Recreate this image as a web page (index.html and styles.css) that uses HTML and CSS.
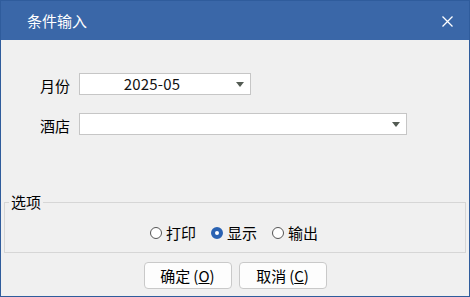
FILE: index.html
```html
<!DOCTYPE html>
<html lang="zh-CN">
<head>
<meta charset="utf-8">
<title>条件输入</title>
<link rel="stylesheet" href="styles.css">
</head>
<body>
<div class="window">
  <div class="titlebar">
    <span class="title">条件输入</span>
    <svg class="close" width="11" height="11" viewBox="0 0 11 11"><path d="M0.5 0.5 L10.5 10.5 M10.5 0.5 L0.5 10.5" stroke="#fff" stroke-width="1.3" fill="none"/></svg>
  </div>
  <div class="content">
    <div class="row">
      <span class="label">月份</span>
      <div class="combo combo-month"><span class="value">2025-05</span><span class="arrow"></span></div>
    </div>
    <div class="row row2">
      <span class="label">酒店</span>
      <div class="combo combo-hotel"><span class="value"></span><span class="arrow"></span></div>
    </div>
    <fieldset class="group">
      <legend>选项</legend>
      <div class="radios">
        <label class="radio"><span class="dot"></span>打印</label>
        <label class="radio checked"><span class="dot"></span>显示</label>
        <label class="radio"><span class="dot"></span>输出</label>
      </div>
    </fieldset>
    <div class="buttons">
      <button class="btn">确定<span class="key">(<u>O</u>)</span></button>
      <button class="btn">取消<span class="key">(<u>C</u>)</span></button>
    </div>
  </div>
</div>
</body>
</html>
```
FILE: styles.css
```css
html, body {
  margin: 0;
  padding: 0;
}
body {
  font-family: "Noto Sans CJK SC", "Liberation Sans", sans-serif;
  color: #000;
}
.window {
  width: 470px;
  height: 297px;
  box-sizing: border-box;
  border: 1px solid #2f5c9c;
  background: #f0f0f0;
  display: flex;
  flex-direction: column;
}
.titlebar {
  height: 39px;
  background: #3a67a8;
  display: flex;
  align-items: center;
  justify-content: space-between;
  padding: 0 16px 0 26px;
  flex-shrink: 0;
}
.title {
  color: #fff;
  font-size: 15px;
  line-height: 20px;
}
.close {
  display: block;
  margin-top: 1px;
}
.content {
  flex: 1;
  display: flex;
  flex-direction: column;
  padding-top: 33px;
}
.row {
  display: flex;
  align-items: center;
  padding-left: 39px;
  height: 22px;
}
.row2 {
  margin-top: 18px;
}
.label {
  width: 32px;
  margin-right: 7px;
  font-size: 15px;
  line-height: 20px;
  margin-top: 4px;
}
.combo {
  box-sizing: border-box;
  height: 22px;
  background: #fff;
  border: 1px solid #c6c6c6;
  display: flex;
  align-items: center;
  position: relative;
}
.combo-month {
  width: 172px;
}
.combo-hotel {
  width: 328px;
}
.value {
  flex: 1;
  text-align: center;
  font-size: 15px;
  line-height: 20px;
  padding-right: 12px;
  color: #111;
  letter-spacing: 0.2px;
}
.arrow {
  width: 0;
  height: 0;
  border-left: 4.5px solid transparent;
  border-right: 4.5px solid transparent;
  border-top: 5px solid #535b53;
  margin-right: 6px;
}
.group {
  margin: 57px 3px 0 3px;
  padding: 11px 0 9px 0;
  border: 1px solid #d6d6d6;
}
.group legend {
  font-size: 15px;
  line-height: 20px;
  padding: 0 2px;
  margin-left: 4px;
}
.radios {
  display: flex;
  justify-content: center;
  gap: 15px;
  height: 20px;
  padding-right: 2px;
}
.radio {
  display: inline-flex;
  align-items: center;
  font-size: 15px;
  line-height: 20px;
}
.dot {
  width: 12px;
  height: 12px;
  box-sizing: border-box;
  border: 1px solid #555;
  border-radius: 50%;
  background: #fff;
  margin-right: 4px;
}
.radio.checked .dot {
  border: 4px solid #2a62b2;
  background: #fff;
}
.buttons {
  display: flex;
  justify-content: center;
  gap: 7px;
  margin-top: 9px;
}
.btn {
  width: 88px;
  height: 27px;
  box-sizing: border-box;
  border: 1px solid #c9c9c9;
  border-radius: 4px;
  background: #fdfdfd;
  font-family: "Noto Sans CJK SC", "Liberation Sans", sans-serif;
  font-size: 15px;
  line-height: 20px;
  padding: 0;
  color: #000;
}
.key {
  margin-left: 3px;
}
```
